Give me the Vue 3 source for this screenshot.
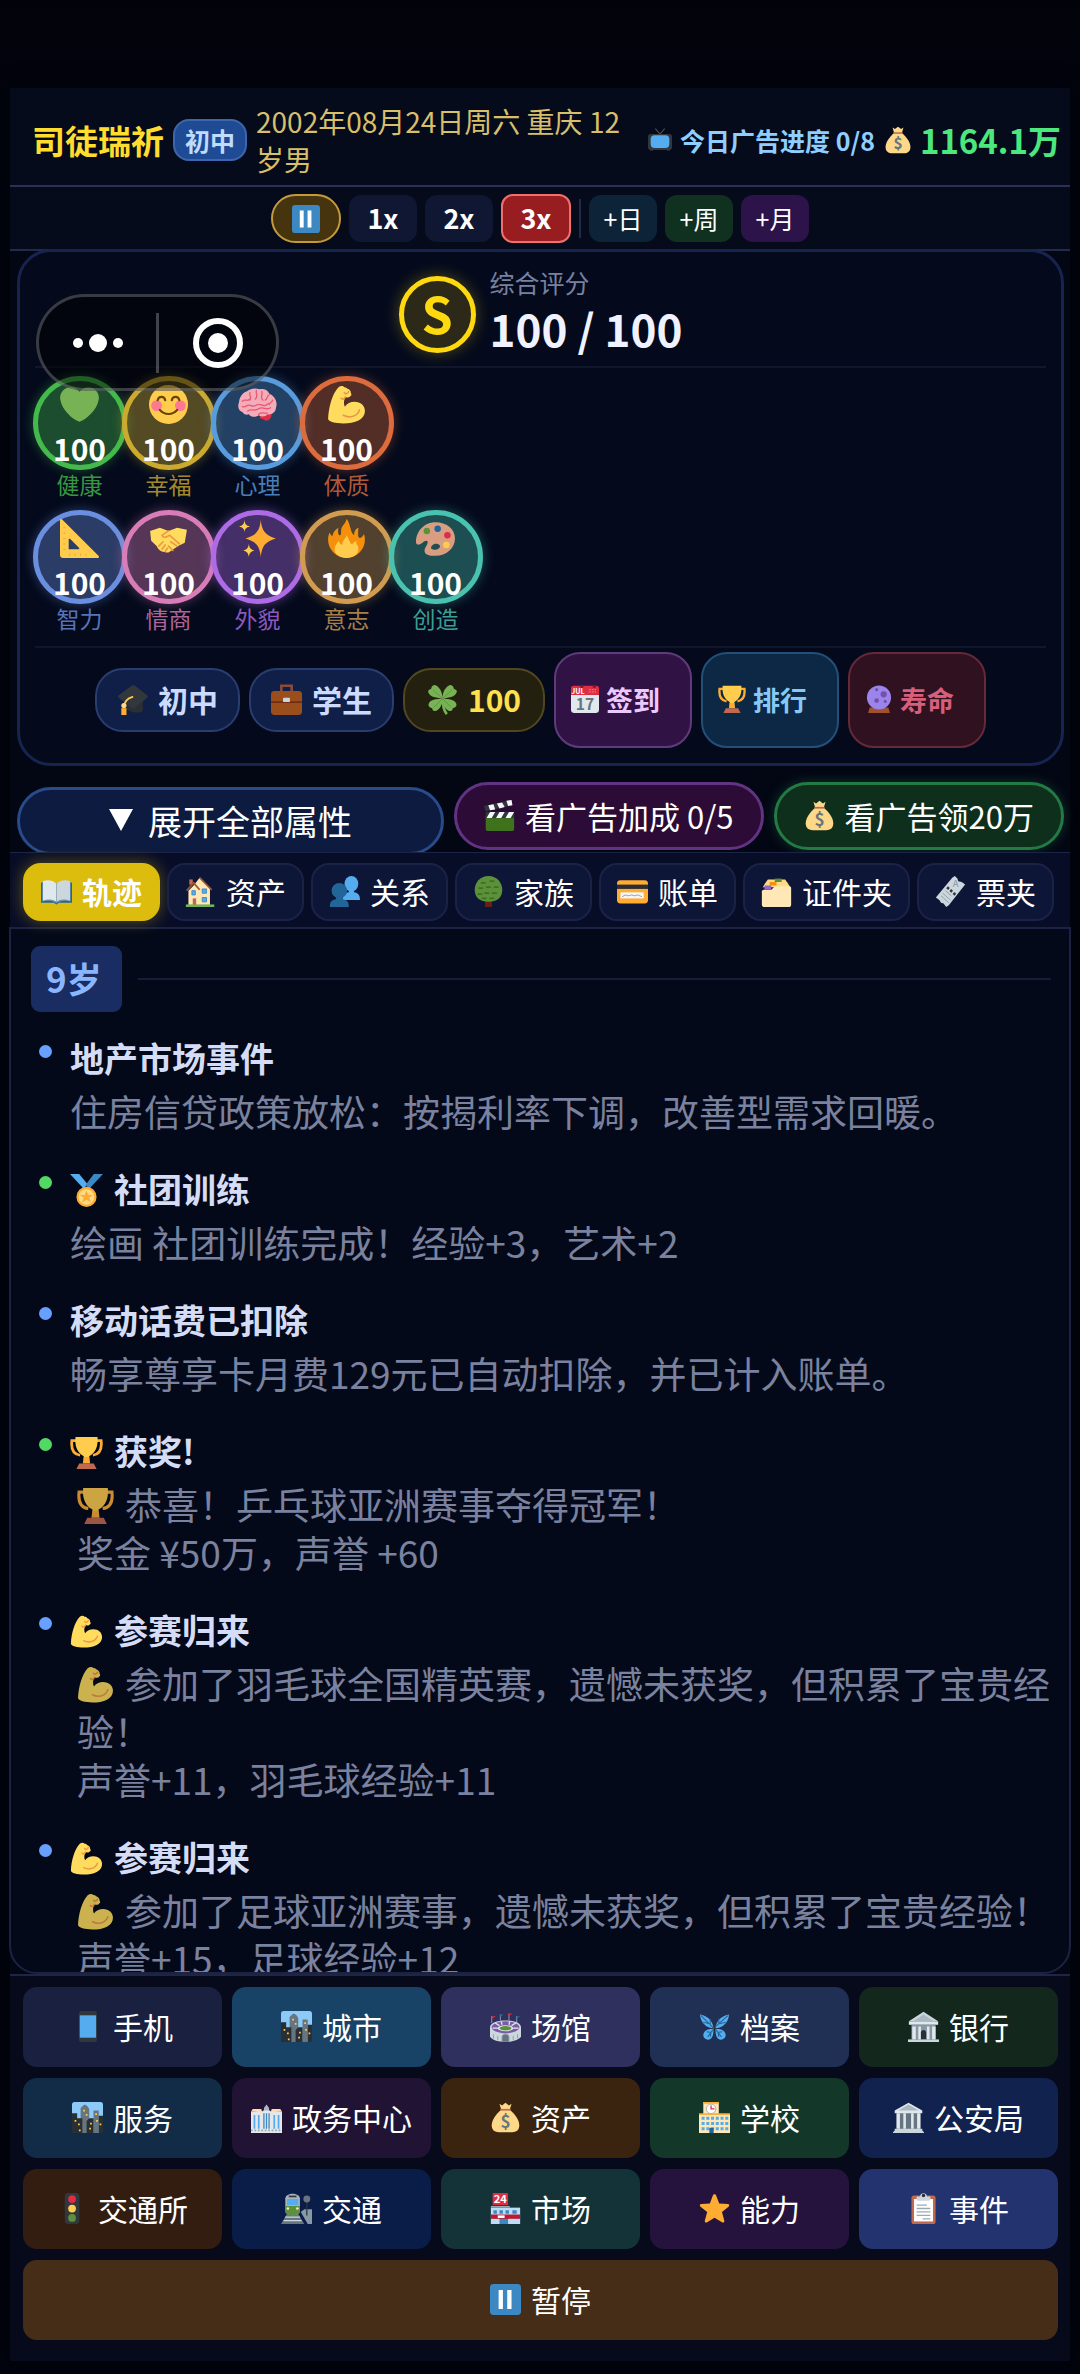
<template>
  <div class="page">
    <svg class="sprite" aria-hidden="true">
      <symbol id="i-tv" viewBox="0 0 36 36">
        <path d="M11 1l7 8 7-8" fill="none" stroke="#4d555b" stroke-width="1.6" />
        <path d="M3 34h5l1-3H3zM28 34h5v-3h-6z" fill="#292f33" />
        <rect x="0" y="9" width="36" height="24" rx="4" fill="#31373d" />
        <rect x="4" y="11" width="28" height="19" rx="6" fill="#55acee" />
      </symbol>
      <symbol id="i-bag" viewBox="0 0 36 36">
        <path d="M11 2l3 2 4-3 4 3 3-2-2 7H13z" fill="#fdd888" />
        <path d="M13 9h10c6 5 11 12 11 18 0 6-4 8-8 8H10c-4 0-8-2-8-8C2 21 7 14 13 9z" fill="#fdd888" />
        <path d="M12 8h12v2H12z" fill="#bf6952" />
        <text x="18" y="30" text-anchor="middle" font-size="20" font-weight="700" fill="#67757f">$</text>
      </symbol>
      <symbol id="i-pause" viewBox="0 0 36 36">
        <rect width="36" height="36" rx="4" fill="#3b88c3" />
        <path d="M10 7h5v22h-5zM20 7h5v22h-5z" fill="#fff" />
      </symbol>
      <symbol id="i-heart" viewBox="0 0 36 36">
        <path d="M35.900 11.800c0-5.400-4.300-9.800-9.700-9.800-3.300 0-6.300 1.700-8.200 4.300C16.200 3.700 13.200 2 9.900 2 4.500 2 .1 6.400.1 11.800c0 .8.100 1.500.300 2.200C1.800 22.600 11.200 31.600 18 34c6.800-2.400 16.200-11.500 17.600-20 .2-.7.300-1.400.300-2.200z" fill="#77b255" />
      </symbol>
      <symbol id="i-smile" viewBox="0 0 36 36">
        <circle cx="18" cy="18" r="18" fill="#ffcc4d" />
        <circle cx="7" cy="19" r="5" fill="#ff7892" />
        <circle cx="29" cy="19" r="5" fill="#ff7892" />
        <path d="M8 14c1-4 6-4 7 0M21 14c1-4 6-4 7 0M10 23c4 5 12 5 16 0" fill="none" stroke="#664500" stroke-width="2" stroke-linecap="round" />
      </symbol>
      <symbol id="i-brain" viewBox="0 0 36 36">
        <path d="M21 27c2-3 8-3 10 0 0 3-2 6-5 6-2 0-3-2-6-2z" fill="#dd2e44" />
        <path d="M29 8c-2-4-6-5-9-4-5-2-10 0-12 2-4 1-7 6-7 10-2 4 0 8 3 9 1 2 4 3 6 2 2 3 7 3 9 1 3 2 7 1 8-1 4 1 8-2 8-6 2-5-1-11-6-13z" fill="#f4abba" />
        <path d="M4 15c3-3 4 1 7-2M11 7c-1 3 2 4 0 7M17 5c-1 3 2 5-1 8M22 6c1 4-2 5 1 8M29 9c-3 1-1 4-4 5M4 20c4 1 4-3 8-1s5-2 8-1 5 2 8-1M9 24c4-3 6 1 10-2s7 2 11-1M19 27c2-2 5-1 8-1M32 14c-1 3-3 2-3 4" fill="none" stroke="#ea596e" stroke-width="1.200" stroke-linecap="round" />
      </symbol>
      <symbol id="i-muscle" viewBox="0 0 36 36">
        <path d="M15.900 2c-1-1.500-3.500-1.500-5.500.2C5 8 1.500 20 1 31c0 3 7 4.500 14 4.500 11 0 20-3.500 20-11.500 0-5-4-8.500-9.500-8.500-4 0-7 1.500-9 4.500-1.500-3-1-6 .5-9 2 1 4 .5 4.800-1 1-.4 1-1.500.2-2.500.3-2-1.500-3.500-3-4-.8-1-2-1.500-3.100-1.500z" fill="#ffdc5d" />
        <path d="M15 28c6 3 13 1 15-5M16 7c1 2 3 1 4-1M13 12c1 2 3 1 4-1" fill="none" stroke="#ef9645" stroke-width="1.500" stroke-linecap="round" />
      </symbol>
      <symbol id="i-ruler" viewBox="0 0 36 36">
        <path fill-rule="evenodd" d="M0 1c0-1 1-1.500 2-.5L35.500 34c1 1 .5 2-.5 2H3c-2 0-3-1-3-3zM8 19v9h9c1 0 1-1 .5-1.500l-8-8c-.5-.5-1.500-.5-1.500.5z" fill="#ffcc4d" />
        <path d="M3 8h2M3 13h2M3 18h2M3 23h2M3 28h2M9 32v2M14 32v2M19 32v2M24 32v2" stroke="#f4900c" stroke-width=".6" />
      </symbol>
      <symbol id="i-handshake" viewBox="0 0 36 36">
        <path d="M1 11l9-3 8 3 8-3 9 2-2 12-6 3-9 6c-3 0-5-1-6-1-3-1-4-3-5-5L2 20z" fill="#ffdc5d" />
        <path d="M18 11l-6 4c1 3 4 2 7 0l9 8M9 25l4-4M12 28l3-4M15 30l2-3M20 21l6 4M18 25l4 4" fill="none" stroke="#ef9645" stroke-width="1.500" stroke-linecap="round" />
      </symbol>
      <symbol id="i-sparkles" viewBox="0 0 36 36">
        <path d="M21 1c1 10 4 14 14 17-10 3-13 7-14 17-1-10-4-14-14-17C17 15 20 11 21 1z" fill="#ffac33" />
        <path d="M6 1c.5 4 1.500 5 5 6-3.500 1-4.500 2-5 5-.5-3-1.500-4-5-5 3.500-1 4.500-2 5-6zM10 23c.6 4 2 5 5 6-3 1-4.400 2-5 6-.6-4-2-5-5-6 3-1 4.400-2 5-6z" fill="#ffcc4d" />
      </symbol>
      <symbol id="i-fire" viewBox="0 0 36 36">
        <path d="M35 19c0-2-.3-3.600-.8-5.200-.8 1.500-2.200 3.700-3.700 3.700-2.700 0-1.500-6.500-1.500-9.500-3 1-4 4-4 7-4-3-3-11-7-15-1 5-5 6-5 11 0 2 0 4-1 4-2 0-2-4-1.500-7C7 10 5 14 5 16c-1-.5-2-2-2.500-3.500C1.400 14.500 1 16.700 1 19c0 9.400 7.600 17 17 17s17-7.600 17-17z" fill="#f4900c" />
        <path d="M28 24c-1-1-1-2-1-4-2 1-3 3-4 3-2 0-2-4-5-8-1 4-4 5-4 9-2-1-3-2-3-4-2 2-4 5-4 8 0 5 5 8 11 8s11-3 11-8c0-2-.5-3-1-4z" fill="#ffcc4d" />
      </symbol>
      <symbol id="i-palette" viewBox="0 0 36 36">
        <path fill-rule="evenodd" d="M18 3C8 3 0 11 0 21c0 4 4 3 7 0 3-2 5-1 3 3-2 3-3 6-1 8 3 2 7 2 9 2 10 0 18-7 18-16S28 3 18 3zm-1 20c3-1 6 1 5 3s-5 3-7 2-1-4 2-5z" fill="#d99e82" />
        <circle cx="10" cy="11" r="3" fill="#5c913b" />
        <circle cx="20" cy="9" r="3" fill="#226699" />
        <circle cx="29" cy="15" r="3" fill="#dd2e44" />
        <circle cx="28" cy="24" r="3" fill="#ffcc4d" />
      </symbol>
      <symbol id="i-cap" viewBox="0 0 36 36">
        <path d="M9 18v9c3 5 16 9 21 4V18z" fill="#292f33" />
        <path d="M17 2c1-.7 3-.7 4 0l14 11c1 1 1 2 0 3L21 28c-1 1-3 1-4 0L2 16c-1-1-1-2 0-3z" fill="#31373d" />
        <path d="M18 15c-6 2-10 5-10 12" fill="none" stroke="#ffcc4d" stroke-width="2" stroke-linecap="round" />
        <circle cx="8" cy="25" r="3" fill="#ffd983" />
        <path d="M5 28h6v8H5z" fill="#ffac33" />
      </symbol>
      <symbol id="i-briefcase" viewBox="0 0 36 36">
        <path d="M12 8V2h12v6" fill="none" stroke="#8a4b38" stroke-width="3" />
        <rect x="0" y="8" width="36" height="28" rx="4" fill="#9a4e1c" />
        <path d="M0 21h36" stroke="#662113" stroke-width="1.500" />
        <rect x="14" y="16" width="8" height="5" rx="1" fill="#ccd6dd" />
      </symbol>
      <symbol id="i-clover" viewBox="0 0 36 36">
        <path d="M19 17c-1 7 0 13 4 18" fill="none" stroke="#77b255" stroke-width="3" />
        <path d="M18 17L8 15C3 14 0 9 2 7c2-1 3-1 3-2 0-3 4-5 6-3 5 3 7 9 7 15zM18 17c0-6 2-12 7-15 2-2 6 0 6 3 0 1 1 1 3 2 2 2-1 7-6 8zM18 17c0 6-2 11-7 14-3 1-5 0-5-3-3 0-5-3-4-5 1-5 9-6 16-6zM18 17c7 0 15 1 16 6 1 2-1 5-4 5 0 3-2 4-5 3-5-3-7-8-7-14z" fill="#77b255" />
        <path d="M7 7l11 10L29 7M8 27l10-10 10 10" fill="none" stroke="#5c913b" />
      </symbol>
      <symbol id="i-calendar" viewBox="0 0 36 36">
        <path d="M0 12h36v20c0 2-2 4-4 4H4c-2 0-4-2-4-4z" fill="#e1e8ed" />
        <path d="M0 4c0-2 2-3 4-3h28c2 0 4 1 4 3v9H0z" fill="#dd2e44" />
        <circle cx="14" cy="2" r="2" fill="#761c2b" />
        <circle cx="30" cy="2" r="2" fill="#761c2b" />
        <text x="9" y="11" text-anchor="middle" font-size="9" font-weight="700" fill="#fff">JUL</text>
        <path d="M23 6h10M23 9h10" stroke="#f5bdc5" stroke-dasharray="1 1" />
        <text x="18" y="32" text-anchor="middle" font-size="20" font-weight="700" fill="#66757f">17</text>
      </symbol>
      <symbol id="i-trophy" viewBox="0 0 36 36">
        <path d="M7 5H2c-1 9 2 15 9 16M29 5h5c1 9-2 15-9 16" fill="none" stroke="#ffac33" stroke-width="3" />
        <path d="M6 1h24c1 10-2 17-9 21v7h-6v-7C8 18 5 11 6 1z" fill="#ffcc4d" />
        <path d="M15 23h6l1 7h-8z" fill="#ffac33" />
        <path d="M10 30h16l3 6H7z" fill="#c1694f" />
      </symbol>
      <symbol id="i-crystal" viewBox="0 0 36 36">
        <path d="M6 29h24l2 7H4z" fill="#a0522d" />
        <circle cx="18" cy="16" r="15.500" fill="#9b84ec" />
        <circle cx="24" cy="12" r="4" fill="#7450a8" />
        <circle cx="15" cy="20" r="3" fill="#7450a8" />
        <circle cx="15" cy="6" r="2" fill="#7450a8" />
        <circle cx="26" cy="21" r="2" fill="#7450a8" />
      </symbol>
      <symbol id="i-clapper" viewBox="0 0 36 36">
        <rect x="2" y="16" width="33" height="20" rx="3" fill="#3e721d" />
        <path d="M2 14h33v7H2z" fill="#31373d" />
        <path d="M7 14h6l-4 7H3zM18 14h6l-4 7h-6zM29 14h6l-4 7h-6z" fill="#f5f8fa" />
        <path d="M0 7L32 0l1 6L2 13z" fill="#31373d" />
        <path d="M5 6l6-1 2 6-6 1zM15 4l6-1 3 5-6 2zM26 1l6-1 1 6-5 1z" fill="#f5f8fa" />
      </symbol>
      <symbol id="i-book" viewBox="0 0 36 36">
        <path d="M0 8c6-3 12-2 18 1 6-3 12-4 18-1v23H21l-3 2-3-2H0z" fill="#226699" />
        <path d="M2 6c6-2 12-1 16 3v21c-4-3-10-3-16-1z" fill="#e1e8ed" />
        <path d="M34 6c-6-2-12-1-16 3v21c4-3 10-3 16-1z" fill="#ccd6dd" />
        <path d="M18 9v21M2 29c5-2 12-1 16 2 4-3 11-4 16-2" fill="none" stroke="#99aab5" />
      </symbol>
      <symbol id="i-house" viewBox="0 0 36 36">
        <path d="M4 34V17l6-6 7-9 12 12v20z" fill="#ffe8b6" />
        <path d="M5 4h4v6H5z" fill="#c1694f" />
        <path d="M2 17l8-9 7 8M17 2l14 14" fill="none" stroke="#a0542e" stroke-width="2" />
        <path d="M8 17h4v5H8zM20 15h5v5h-5zM20 25h5v5h-5z" fill="#55acee" stroke="#3b88c3" />
        <path d="M9 26h4v8H9z" fill="#c1694f" />
        <path d="M1 33h33v3H1z" fill="#77b255" />
      </symbol>
      <symbol id="i-people" viewBox="0 0 36 36">
        <ellipse cx="26" cy="9" rx="8" ry="9" fill="#55acee" />
        <path d="M23 14h6v5c5 1 7 3 7 9H16c0-6 2-8 7-9z" fill="#55acee" />
        <ellipse cx="12" cy="17" rx="9" ry="9" fill="#226699" />
        <path d="M8 23h8v4c6 1 7 4 7 9H1c0-5 1-8 7-9z" fill="#226699" />
      </symbol>
      <symbol id="i-tree" viewBox="0 0 36 36">
        <path d="M14 28h8v8h-8z" fill="#662113" />
        <path d="M18 0C8 0 2 8 2 16c0 9 6 14 16 14s16-5 16-14C34 8 28 0 18 0z" fill="#5c913b" />
        <path d="M10 8h4M20 6h4M7 14h4M16 13h4M25 13h4M6 21h4M14 20h4M23 20h4M11 26h4M20 26h4" stroke="#3e721d" stroke-width="2" stroke-linecap="round" />
      </symbol>
      <symbol id="i-card" viewBox="0 0 36 36">
        <rect y="5" width="36" height="27" rx="4" fill="#ffac33" />
        <path d="M0 10h36v5H0z" fill="#292f33" />
        <path d="M4 19h27v7H4z" fill="#f4f7f9" />
        <path d="M6 24l4-2 3 1 4-1 3 1 4-1 5 2" fill="none" stroke="#8899a6" />
      </symbol>
      <symbol id="i-folder" viewBox="0 0 36 36">
        <path d="M5 8l3-4h20l3 4 3 5H2z" fill="#ffd983" />
        <path d="M16 3h8v4h-8z" fill="#5c913b" />
        <path d="M10 7h8v4h-8z" fill="#f4900c" />
        <path d="M1 17l2-1h9l4-4h17c1 0 2 1 2 2v19c0 2-1 3-3 3H4c-2 0-3-1-3-3z" fill="#ffe8b6" />
        <path d="M4 11h8v5H4z" fill="#9268ca" />
      </symbol>
      <symbol id="i-ticket" viewBox="0 0 36 36">
        <path d="M20 2l3-2 3 3 1 3 4 1 4 3-19 24-3 2-3-4-3-1-2-3-4-3L20 2z" fill="#ccd6dd" />
        <path d="M14 13l10 9" stroke="#31373d" stroke-width="3" stroke-dasharray="3 2" />
        <path d="M7 23l9 8M9 20l9 8M12 17l7 6" stroke="#8899a6" />
        <text x="24" y="13" text-anchor="middle" font-size="11" fill="#8899a6">A</text>
      </symbol>
      <symbol id="i-medal" viewBox="0 0 36 36">
        <path d="M0 0h10l9 11-4 5z" fill="#55acee" />
        <path d="M26 0h10L21 16l-4-4z" fill="#3b88c3" />
        <circle cx="18" cy="25" r="11" fill="#ffac33" />
        <circle cx="18" cy="25" r="8.500" fill="#ffd983" />
        <path d="M18 18l2 5h5l-4 3 2 5-5-3-5 3 2-5-4-3h5z" fill="#ffac33" />
      </symbol>
      <symbol id="i-phone" viewBox="0 0 36 36">
        <rect x="8" y="0" width="21" height="36" rx="3" fill="#31373d" />
        <path d="M9 5h19v26H9z" fill="#55acee" />
      </symbol>
      <symbol id="i-city" viewBox="0 0 36 36">
        <rect width="36" height="36" rx="3" fill="#8ccaf7" />
        <path d="M10 36V7l3-3 2-1 3 2 2 3v28zM25 36V10h6v26z" fill="#66757f" />
        <path d="M0 13h6v6h6v17H0zM17 36V22l3-3h5v17zM31 36V16h5v20z" fill="#292f33" />
        <path d="M13 9h2v2h-2zM16 14h2v2h-2zM27 13h2v2h-2zM3 21h2v2H3zM7 25h2v2H7zM8 32h2v2H8zM21 24h2v2h-2zM20 30h2v2h-2zM28 21h2v2h-2zM32 25h2v2h-2z" fill="#ffcc4d" />
      </symbol>
      <symbol id="i-stadium" viewBox="0 0 36 36">
        <path d="M2 14V6M12 11V4M22 11V4M31 14V6" stroke="#99aab5" />
        <path d="M2 6h5L2 9zM21 3h5l-5 3z" fill="#dd2e44" />
        <path d="M12 4h4l-4 3zM31 6h4l-4 3z" fill="#226699" />
        <path d="M0 19c0-5 8-8 18-8s18 3 18 8v11c-3 4-10 6-18 6S3 34 0 30z" fill="#ccd6dd" />
        <ellipse cx="18" cy="19" rx="16" ry="7" fill="#7b5ba6" />
        <path d="M6 14l5 3M13 12l1 4M23 12l-1 4M30 14l-5 3M3 20h6M33 20h-6" stroke="#e1e8ed" stroke-width="1.500" />
        <ellipse cx="18" cy="20" rx="9" ry="3.500" fill="#e1e8ed" />
        <ellipse cx="18" cy="20" rx="7" ry="2.500" fill="#5c913b" />
        <path d="M4 27v5M9 29v5M27 29v5M32 27v5M14 36v-6c0-4 8-4 8 0v6z" fill="#66757f" stroke="#8899a6" />
      </symbol>
      <symbol id="i-butterfly" viewBox="0 0 36 36">
        <path d="M17 20C9 20 2 14 1 4c8 1 15 7 16 16zM19 20c8 0 15-6 16-16-8 1-15 7-16 16z" fill="#55acee" />
        <path d="M17 21c-6-1-12 2-12 7 0 4 4 6 7 5 4-1 5-7 5-12zM19 21c6-1 12 2 12 7 0 4-4 6-7 5-4-1-5-7-5-12z" fill="#55acee" />
        <path d="M2 5l15 15L34 5M5 13l8 2 0-6M31 13l-8 2V9M17 21l-7 9M19 21l7 9M9 24l5 1-1 5M27 24l-5 1 1 5" fill="none" stroke="#226699" stroke-width="1.200" />
        <path d="M18 14v13" stroke="#292f33" stroke-width="1.500" />
      </symbol>
      <symbol id="i-bank" viewBox="0 0 36 36">
        <path d="M18 1l17 11H1z" fill="#ccd6dd" />
        <path d="M18 4l12 8H6z" fill="#aab8c2" />
        <path d="M1 12h34v4H1z" fill="#e1e8ed" />
        <path d="M4 16h28v17H4z" fill="#8899a6" />
        <path d="M5 18h4v15H5zM12 18h3v15h-3zM22 18h3v15h-3zM28 18h4v15h-4z" fill="#e1e8ed" />
        <path d="M15 33v-8c0-4 6-4 6 0v8z" fill="#292f33" />
        <path d="M0 33h36v3H0z" fill="#ccd6dd" />
      </symbol>
      <symbol id="i-hall" viewBox="0 0 36 36">
        <path d="M5 12h26v20H5z" fill="#66757f" />
        <path d="M18 1l16 9v3H2v-3z" fill="#e1e8ed" />
        <path d="M18 3l12 7H6z" fill="#aab8c2" />
        <path d="M4 13h4v18H4zM12 13h3v18h-3zM21 13h3v18h-3zM28 13h4v18h-4z" fill="#e1e8ed" />
        <path d="M2 31h32v2l2 2v1H0v-1l2-2z" fill="#ccd6dd" />
      </symbol>
      <symbol id="i-gov" viewBox="0 0 36 36">
        <path d="M15 11V7l3-4 3 4v4z" fill="#aab8c2" />
        <path d="M0 11l2-3h10l1 4zM23 12l1-4h10l2 3z" fill="#ffd8b5" />
        <path d="M0 11h13l1-1h8l1 1h13v25H0z" fill="#e6e7e8" />
        <path d="M4 15v16M9 15v16M27 15v16M32 15v16" stroke="#55acee" stroke-width="2" />
        <path d="M15 13v18M18 13v18M21 13v18" stroke="#3b88c3" stroke-width="1.500" />
        <path d="M0 33h36" stroke="#99aab5" stroke-dasharray="2 2" stroke-width="2" />
      </symbol>
      <symbol id="i-school" viewBox="0 0 36 36">
        <path d="M5 0h18v14H5z" fill="#ffe8b6" />
        <path d="M5 0h18v2H5zM0 13h36v3H0z" fill="#ffac33" />
        <path d="M0 15h36v21H0z" fill="#ffe8b6" />
        <circle cx="14" cy="8" r="5.500" fill="#fff" stroke="#99aab5" />
        <path d="M14 4v4h4" fill="none" stroke="#dd2e44" stroke-width="1.500" />
        <path d="M3 19h31M3 25h31M3 31h31" stroke="#55acee" stroke-width="3.500" stroke-dasharray="3.500 2" />
        <path d="M12 30h5v6h-5z" fill="#226699" />
      </symbol>
      <symbol id="i-light" viewBox="0 0 36 36">
        <rect x="9" width="17" height="36" rx="4" fill="#31373d" />
        <circle cx="17.500" cy="7" r="4.500" fill="#dd2e44" />
        <circle cx="17.500" cy="18" r="4.500" fill="#ffcc4d" />
        <circle cx="17.500" cy="29" r="4.500" fill="#5c913b" />
      </symbol>
      <symbol id="i-train" viewBox="0 0 36 36">
        <path d="M7 24h13l7 12H0z" fill="#66757f" />
        <path d="M5 28h17M3 32h21" stroke="#ccd6dd" stroke-width="1.500" />
        <path d="M23 22l4-3h9v17h-5z" fill="#8899a6" />
        <path d="M30 8v18" stroke="#31373d" stroke-width="1.500" />
        <circle cx="30" cy="7" r="4" fill="#66757f" />
        <path d="M5 6c1-7 16-7 17 0v16c-3 5-14 5-17 0z" fill="#a6b3bd" />
        <path d="M5 15h17v7c-3 5-14 5-17 0z" fill="#5c913b" />
        <path d="M7 7h13v7H7z" fill="#55acee" />
        <path d="M9 3h9v2H9z" fill="#31373d" />
        <circle cx="8" cy="18" r="1.500" fill="#ffe8b6" />
        <circle cx="19" cy="18" r="1.500" fill="#ffe8b6" />
      </symbol>
      <symbol id="i-store" viewBox="0 0 36 36">
        <path d="M1 17h34v19H1z" fill="#bdddf4" />
        <path d="M4 20h4v4H4zM11 20h4v4h-4zM18 20h4v4h-4zM26 20h5v4h-5zM11 29h10v7H11z" fill="#3b88c3" />
        <path d="M1 15h22v2H1z" fill="#99aab5" />
        <path d="M1 25h34v5H1z" fill="#be1931" />
        <path d="M9 26h8v3H9z" fill="#fff" />
        <rect x="3" y="0" width="18" height="14" rx="1" fill="#dd2e44" />
        <text x="12" y="12" text-anchor="middle" font-size="13" font-weight="700" fill="#fff">24</text>
      </symbol>
      <symbol id="i-star" viewBox="0 0 36 36">
        <path d="M18 1.500c1 0 1.500.6 1.900 1.500l3.600 9.300 9.900.5c2 .2 2.300 1.900.9 3.100l-7.600 6.300 2.600 9.700c.5 2-.9 3-2.600 2L18 28.600l-8.500 5.300c-1.800 1-3.200-.1-2.700-2l2.700-9.700-7.700-6.300c-1.500-1.200-1-2.900.9-3.100l9.900-.5L16.100 3c.4-.9 1-1.500 1.900-1.500z" fill="#ffac33" />
      </symbol>
      <symbol id="i-clip" viewBox="0 0 36 36">
        <rect x="4" y="3" width="28" height="33" rx="3" fill="#c1694f" />
        <path d="M7 7h22v26H7z" fill="#fff" />
        <path d="M10 7V4h4c0-5 8-5 8 0h4v3c0 1-1 2-2 2H12c-1 0-2-1-2-2z" fill="#ccd6dd" />
        <circle cx="18" cy="3" r="2" fill="#292f33" />
        <path d="M10 14h12M10 18h16M10 22h16M10 26h16M17 30h9" stroke="#99aab5" stroke-width="1.500" />
      </symbol>
    </svg>

    <main class="app">
      <header class="top-bar">
        <h1 class="player-name">司徒瑞祈</h1>
        <span class="stage-badge">初中</span>
        <span class="date-info">2002年08月24日周六 重庆 12岁男</span>
        <span class="ad-progress">
          <svg class="icon icon-24"><use href="#i-tv" /></svg>
          今日广告进度 0/8
        </span>
        <span class="money">
          <svg class="icon icon-28"><use href="#i-bag" /></svg>
          1164.1万
        </span>
      </header>

      <nav class="speed-bar">
        <button type="button" class="speed-btn pause" aria-label="暂停">
          <svg class="icon icon-28"><use href="#i-pause" /></svg>
        </button>
        <button
          v-for="s in speeds"
          :key="s"
          type="button"
          class="speed-btn"
          :class="{ active: speed === s }"
          @click="speed = s"
        >{{ s }}x</button>
        <span class="separator"></span>
        <button type="button" class="speed-btn skip day">+日</button>
        <button type="button" class="speed-btn skip week">+周</button>
        <button type="button" class="speed-btn skip month">+月</button>
      </nav>

      <section class="stat-card">
        <div class="score-row">
          <div class="grade">S</div>
          <div class="score-info">
            <span class="score-label">综合评分</span>
            <span class="score-value">100 / 100</span>
          </div>
        </div>

        <div class="stats">
          <div v-for="(row, i) in statRows" :key="i" class="stat-row">
            <div v-for="stat in row" :key="stat.icon" class="stat" :class="stat.color">
              <div class="stat-circle">
                <svg class="icon icon-39"><use :href="'#i-' + stat.icon" /></svg>
                <span class="stat-value">100</span>
              </div>
              <span class="stat-label">{{ stat.label }}</span>
            </div>
          </div>
        </div>

        <div class="chips">
          <span class="chip"><svg class="icon icon-31"><use href="#i-cap" /></svg>初中</span>
          <span class="chip"><svg class="icon icon-31"><use href="#i-briefcase" /></svg>学生</span>
          <span class="chip luck"><svg class="icon icon-31"><use href="#i-clover" /></svg>100</span>
          <button type="button" class="chip-btn sign"><svg class="icon icon-28"><use href="#i-calendar" /></svg>签到</button>
          <button type="button" class="chip-btn rank"><svg class="icon icon-28"><use href="#i-trophy" /></svg>排行</button>
          <button type="button" class="chip-btn life"><svg class="icon icon-28"><use href="#i-crystal" /></svg>寿命</button>
        </div>

        <div class="capsule">
          <button type="button" class="capsule-btn" aria-label="更多">
            <svg class="capsule-dots" viewBox="0 0 50 18">
              <circle cx="5" cy="9" r="5" />
              <circle cx="25" cy="9" r="9" />
              <circle cx="45" cy="9" r="5" />
            </svg>
          </button>
          <span class="capsule-line"></span>
          <button type="button" class="capsule-btn" aria-label="关闭">
            <svg class="capsule-ring" viewBox="0 0 50 50">
              <circle cx="25" cy="25" r="22" fill="none" stroke="#fff" stroke-width="6" />
              <circle cx="25" cy="25" r="10" />
            </svg>
          </button>
        </div>
      </section>

      <div class="actions">
        <button type="button" class="expand-btn">
          <svg class="arrow" viewBox="0 0 24 22"><path d="M0 0h24L12 22z" fill="#fff" /></svg>
          展开全部属性
        </button>
        <button type="button" class="ad-btn boost"><svg class="icon icon-31"><use href="#i-clapper" /></svg>看广告加成 0/5</button>
        <button type="button" class="ad-btn cash"><svg class="icon icon-31"><use href="#i-bag" /></svg>看广告领20万</button>
      </div>

      <nav class="tabs">
        <button
          v-for="tab in tabs"
          :key="tab.icon"
          type="button"
          class="tab"
          :class="{ active: currentTab === tab.icon }"
          @click="currentTab = tab.icon"
        >
          <svg class="icon icon-31"><use :href="'#i-' + tab.icon" /></svg>{{ tab.label }}
        </button>
      </nav>

      <section class="log">
        <div class="age-row">
          <h2 class="age-badge">9岁</h2>
          <span class="age-line"></span>
        </div>
        <article v-for="(event, i) in events" :key="i" class="event">
          <span class="dot" :class="event.type"></span>
          <div class="event-body">
            <h3 class="event-title">
              <svg v-if="event.icon" class="icon icon-33"><use :href="'#i-' + event.icon" /></svg>{{ event.title }}
            </h3>
            <div class="event-desc" :class="{ indent: event.descIcon }">
              <p v-for="(line, n) in event.lines" :key="n">
                <svg v-if="n === 0 && event.descIcon" class="icon icon-37"><use :href="'#i-' + event.descIcon" /></svg>{{ line }}
              </p>
            </div>
          </div>
        </article>
      </section>

      <footer class="menu">
        <button v-for="item in menu" :key="item.label" type="button" class="menu-btn" :class="item.color">
          <svg class="icon icon-31"><use :href="'#i-' + item.icon" /></svg>{{ item.label }}
        </button>
      </footer>
    </main>
  </div>
</template>

<script setup>
import { ref } from 'vue';

const speeds = [1, 2, 3];
const speed = ref(3);
const currentTab = ref('book');

const statRows = [
  [
    { icon: 'heart', label: '健康', color: 'green' },
    { icon: 'smile', label: '幸福', color: 'yellow' },
    { icon: 'brain', label: '心理', color: 'blue' },
    { icon: 'muscle', label: '体质', color: 'orange' },
  ],
  [
    { icon: 'ruler', label: '智力', color: 'indigo' },
    { icon: 'handshake', label: '情商', color: 'pink' },
    { icon: 'sparkles', label: '外貌', color: 'purple' },
    { icon: 'fire', label: '意志', color: 'amber' },
    { icon: 'palette', label: '创造', color: 'teal' },
  ],
];

const tabs = [
  { icon: 'book', label: '轨迹' },
  { icon: 'house', label: '资产' },
  { icon: 'people', label: '关系' },
  { icon: 'tree', label: '家族' },
  { icon: 'card', label: '账单' },
  { icon: 'folder', label: '证件夹' },
  { icon: 'ticket', label: '票夹' },
];

const events = [
  { type: 'info', title: '地产市场事件', lines: ['住房信贷政策放松：按揭利率下调，改善型需求回暖。'] },
  { type: 'good', icon: 'medal', title: '社团训练', lines: ['绘画 社团训练完成！经验+3，艺术+2'] },
  { type: 'info', title: '移动话费已扣除', lines: ['畅享尊享卡月费129元已自动扣除，并已计入账单。'] },
  { type: 'good', icon: 'trophy', title: '获奖!', descIcon: 'trophy', lines: ['恭喜！乒乓球亚洲赛事夺得冠军！', '奖金 ¥50万，声誉 +60'] },
  { type: 'info', icon: 'muscle', title: '参赛归来', descIcon: 'muscle', lines: ['参加了羽毛球全国精英赛，遗憾未获奖，但积累了宝贵经验！', '声誉+11，羽毛球经验+11'] },
  { type: 'info', icon: 'muscle', title: '参赛归来', descIcon: 'muscle', lines: ['参加了足球亚洲赛事，遗憾未获奖，但积累了宝贵经验！', '声誉+15，足球经验+12'] },
];

const menu = [
  { icon: 'phone', label: '手机', color: 'c-phone' },
  { icon: 'city', label: '城市', color: 'c-city' },
  { icon: 'stadium', label: '场馆', color: 'c-venue' },
  { icon: 'butterfly', label: '档案', color: 'c-file' },
  { icon: 'bank', label: '银行', color: 'c-bank' },
  { icon: 'city', label: '服务', color: 'c-service' },
  { icon: 'gov', label: '政务中心', color: 'c-gov' },
  { icon: 'bag', label: '资产', color: 'c-asset' },
  { icon: 'school', label: '学校', color: 'c-school' },
  { icon: 'hall', label: '公安局', color: 'c-police' },
  { icon: 'light', label: '交通所', color: 'c-traffic' },
  { icon: 'train', label: '交通', color: 'c-train' },
  { icon: 'store', label: '市场', color: 'c-market' },
  { icon: 'star', label: '能力', color: 'c-skill' },
  { icon: 'clip', label: '事件', color: 'c-event' },
  { icon: 'pause', label: '暂停', color: 'c-pause' },
];
</script>

<style>
body {
  margin: 0;
  background: #02040d;
}
</style>

<style scoped>
.page {
  box-sizing: border-box;
  height: 100vh;
  padding: 88px 10px 13px;
  display: flex;
  flex-direction: column;
  background: linear-gradient(#02030a, #02040e 100px);
  color: #fff;
  font-family: "Noto Sans CJK SC", "Noto Sans", sans-serif;
}

.page * {
  box-sizing: border-box;
}

.sprite {
  display: none;
}

h1,
h2,
h3,
p {
  margin: 0;
}

button {
  border: none;
  margin: 0;
  padding: 0;
  color: inherit;
  font-family: inherit;
  white-space: nowrap;
  cursor: pointer;
}

.icon {
  flex: none;
}

.icon-24 {
  width: 24px;
  height: 24px;
}

.icon-28 {
  width: 28px;
  height: 28px;
}

.icon-31 {
  width: 31px;
  height: 31px;
}

.icon-33 {
  width: 33px;
  height: 33px;
}

.icon-37 {
  width: 37px;
  height: 37px;
}

.icon-39 {
  width: 39px;
  height: 39px;
}

.app {
  flex: 1;
  min-height: 0;
  display: flex;
  flex-direction: column;
  background: #030714;
  box-shadow: 0 0 20px rgba(0, 0, 0, 0.5);
}

/* header */
.top-bar {
  display: flex;
  align-items: center;
  gap: 9px;
  padding: 14px 9px 7px 22px;
  background: #060b1c;
  border-bottom: 2px solid #293256;
  white-space: nowrap;
}

.player-name {
  color: #ffdc2e;
  font-size: 33px;
  line-height: 42px;
}

.stage-badge {
  padding: 0 10px;
  border: 2px solid #3d66ac;
  border-radius: 16px;
  background: #1f4b95;
  color: #bfdcff;
  font-size: 25px;
  font-weight: 700;
  line-height: 38px;
}

.date-info {
  flex: 1;
  min-width: 0;
  color: #d8bf6a;
  font-size: 28px;
  line-height: 38px;
  white-space: normal;
}

.ad-progress,
.money {
  display: flex;
  align-items: center;
  gap: 8px;
  font-weight: 700;
}

.ad-progress {
  color: #8fcfff;
  font-size: 25px;
}

.money {
  color: #4be87d;
  font-size: 33px;
  line-height: 42px;
}

/* speed */
.speed-bar {
  display: flex;
  justify-content: center;
  align-items: center;
  gap: 8px;
  padding: 7px 0 6px;
  background: #060b1c;
  border-bottom: 2px solid #222b4e;
}

.speed-btn {
  display: flex;
  justify-content: center;
  align-items: center;
  width: 68px;
  height: 47px;
  padding-bottom: 2px;
  border-radius: 12px;
  background: #101733;
  font-size: 27px;
  font-weight: 700;
}

.speed-btn.pause {
  width: 70px;
  height: 49px;
  padding: 0;
  border: 2px solid #c59b3a;
  border-radius: 25px;
  background: #46340f;
}

.speed-btn.active {
  width: 70px;
  height: 49px;
  border: 2px solid #f0716b;
  background: #981d20;
}

.speed-btn.skip {
  font-size: 25px;
  font-weight: 400;
}

.speed-btn.day {
  background: #0d2438;
}

.speed-btn.week {
  background: #103020;
}

.speed-btn.month {
  background: #2c144b;
}

.separator {
  width: 2px;
  height: 39px;
  background: #222a49;
}

/* stat card */
.stat-card {
  position: relative;
  margin: -2px 6px 0 7px;
  padding: 16px 15px 15px;
  border: 3px solid #182450;
  border-radius: 34px;
  background: #040a1c;
}

.score-row {
  display: flex;
  justify-content: center;
  align-items: center;
  gap: 14px;
  padding-bottom: 6px;
  border-bottom: 2px solid #10162c;
}

.grade {
  width: 77px;
  height: 77px;
  border: 5px solid #ffd90f;
  border-radius: 50%;
  background: #2c2918;
  box-shadow: 0 0 16px rgba(255, 217, 15, 0.3);
  color: #ffd90f;
  font-size: 50px;
  font-weight: 700;
  line-height: 62px;
  text-align: center;
}

.score-info {
  display: flex;
  flex-direction: column;
  gap: 6px;
  padding-bottom: 6px;
}

.score-label {
  color: #78819f;
  font-size: 25px;
  line-height: 28px;
}

.score-value {
  color: #f0f3ff;
  font-size: 44px;
  font-weight: 700;
  line-height: 52px;
}

.stats {
  display: flex;
  flex-direction: column;
  gap: 12px;
  padding: 8px 0 14px;
  border-bottom: 2px solid #10162c;
}

.stat-row {
  display: flex;
}

.stat {
  width: 89px;
  display: flex;
  flex-direction: column;
  align-items: center;
}

.stat-circle {
  flex: none;
  width: 94px;
  height: 94px;
  padding-top: 4px;
  display: flex;
  flex-direction: column;
  align-items: center;
  gap: 4px;
  border: 5px solid;
  border-radius: 50%;
}

.stat-value {
  color: #fff;
  font-size: 30px;
  font-weight: 700;
  line-height: 40px;
}

.stat-label {
  font-size: 23px;
  line-height: 28px;
  opacity: 0.8;
}

.green { color: #43ba4b; }
.yellow { color: #cca92f; }
.blue { color: #589cde; }
.orange { color: #dc6c3d; }
.indigo { color: #6b8fe0; }
.pink { color: #d97db8; }
.purple { color: #ad6be6; }
.amber { color: #d29c50; }
.teal { color: #4ac2b0; }

.green .stat-circle { background: rgba(67, 186, 75, 0.38); box-shadow: 0 0 12px rgba(67, 186, 75, 0.4); }
.yellow .stat-circle { background: rgba(204, 169, 47, 0.4); box-shadow: 0 0 12px rgba(204, 169, 47, 0.4); }
.blue .stat-circle { background: rgba(88, 156, 222, 0.38); box-shadow: 0 0 12px rgba(88, 156, 222, 0.4); }
.orange .stat-circle { background: rgba(220, 108, 61, 0.37); box-shadow: 0 0 12px rgba(220, 108, 61, 0.4); }
.indigo .stat-circle { background: rgba(107, 143, 224, 0.38); box-shadow: 0 0 12px rgba(107, 143, 224, 0.4); }
.pink .stat-circle { background: rgba(217, 125, 184, 0.38); box-shadow: 0 0 12px rgba(217, 125, 184, 0.4); }
.purple .stat-circle { background: rgba(173, 107, 230, 0.38); box-shadow: 0 0 12px rgba(173, 107, 230, 0.5); }
.amber .stat-circle { background: rgba(210, 156, 80, 0.38); box-shadow: 0 0 12px rgba(210, 156, 80, 0.4); }
.teal .stat-circle { background: rgba(74, 194, 176, 0.37); box-shadow: 0 0 12px rgba(74, 194, 176, 0.4); }

.chips {
  display: flex;
  justify-content: center;
  align-items: center;
  gap: 9px;
  padding-top: 4px;
}

.chip {
  display: flex;
  align-items: center;
  gap: 10px;
  height: 64px;
  padding: 0 20px 2px;
  border: 2px solid #293d6e;
  border-radius: 28px;
  background: #0f1f48;
  color: #cbdaff;
  font-size: 30px;
  font-weight: 700;
}

.chip.luck {
  padding: 0 22px 2px;
  border-color: #51471f;
  background: #242010;
  color: #ffe14f;
}

.chip-btn {
  display: flex;
  align-items: center;
  gap: 7px;
  width: 138px;
  height: 96px;
  padding: 0 0 2px 15px;
  border: 2px solid;
  border-radius: 26px;
  font-size: 27px;
  font-weight: 700;
}

.chip-btn.sign {
  border-color: #603a7c;
  background: #311244;
  color: #ecc8ff;
}

.chip-btn.rank {
  border-color: #225078;
  background: #0c2845;
  color: #84c9f8;
}

.chip-btn.life {
  border-color: #652938;
  background: #30111f;
  color: #d75f7c;
}

/* floating capsule above the card */
.capsule {
  position: absolute;
  top: 42px;
  left: 16px;
  width: 243px;
  height: 97px;
  display: flex;
  align-items: center;
  border: 3px solid rgba(255, 255, 255, 0.22);
  border-radius: 49px;
  background: rgba(0, 0, 0, 0.5);
}

.capsule-btn {
  flex: 1;
  display: flex;
  justify-content: center;
  background: none;
}

.capsule-btn svg {
  fill: #fff;
}

.capsule-dots {
  width: 50px;
  height: 18px;
}

.capsule-ring {
  width: 50px;
  height: 50px;
}

.capsule-line {
  width: 3px;
  height: 60px;
  background: rgba(255, 255, 255, 0.25);
}

/* actions */
.actions {
  display: flex;
  align-items: flex-start;
  gap: 10px;
  padding: 16px 6px 0 7px;
}

.expand-btn,
.ad-btn {
  display: flex;
  justify-content: center;
  align-items: center;
  height: 68px;
  padding-bottom: 2px;
  border: 3px solid;
  border-radius: 34px;
}

.expand-btn {
  flex: 1;
  gap: 15px;
  margin-top: 5px;
  border-color: #284b8c;
  background: #0d1b40;
  font-size: 34px;
}

.arrow {
  width: 24px;
  height: 22px;
}

.ad-btn {
  gap: 10px;
  padding: 0 27px 2px;
  font-size: 31px;
}

.ad-btn.boost {
  border-color: #623383;
  background: #2c0c36;
}

.ad-btn.cash {
  border-color: #237a44;
  background: #0f2f1d;
  box-shadow: 0 0 12px rgba(35, 122, 68, 0.4);
}

/* tabs */
.tabs {
  position: relative;
  display: flex;
  gap: 7px;
  margin-top: -3px;
  padding: 10px 13px 6px;
  border-top: 1px solid #1b2444;
  background: #080d27;
}

.tab {
  display: flex;
  align-items: center;
  gap: 10px;
  height: 58px;
  padding: 0 16px 2px;
  border: 2px solid #1a2347;
  border-radius: 18px;
  background: #0e1638;
  font-size: 30px;
}

.tab.active {
  border-color: #dcbc0c;
  background: #dcbc0c;
  box-shadow: 0 0 16px rgba(220, 188, 12, 0.4);
  font-weight: 700;
}

/* life log */
.log {
  flex: 1;
  min-height: 0;
  overflow: hidden;
  margin: 0 -1px;
  padding: 17px 18px 0 20px;
  border: 2px solid #1c2242;
  border-radius: 0 0 28px 28px;
  background: #040919;
}

.age-row {
  display: flex;
  align-items: center;
  gap: 16px;
  margin-bottom: 18px;
}

.age-badge {
  padding: 0 20px 2px 15px;
  border-radius: 9px;
  background: #1a2d63;
  color: #8ab6ff;
  font-size: 35px;
  line-height: 64px;
}

.age-line {
  flex: 1;
  height: 2px;
  background: #151d3b;
}

.event {
  display: flex;
  gap: 18px;
  margin-bottom: 26px;
  padding-left: 8px;
}

.dot {
  flex: none;
  width: 13px;
  height: 13px;
  margin-top: 15px;
  border-radius: 50%;
}

.dot.info {
  background: #68a0ff;
}

.dot.good {
  background: #52d964;
}

.event-body {
  flex: 1;
  min-width: 0;
}

.event-title {
  margin-bottom: 1px;
  color: #d5dcf6;
  font-size: 34px;
  line-height: 56px;
}

.event-title .icon {
  margin-right: 11px;
  vertical-align: -4px;
}

.event-desc {
  color: #7a829f;
  font-size: 37px;
  line-height: 48px;
}

.event-desc.indent {
  padding-left: 7px;
}

.event-desc .icon {
  margin-right: 11px;
  vertical-align: -4px;
  opacity: 0.8;
}

/* bottom menu */
.menu {
  display: grid;
  grid-template-columns: repeat(5, 1fr);
  gap: 11px 10px;
  padding: 11px 12px 21px 13px;
  border-top: 2px solid #1e2547;
  background: #060a1a;
}

.menu-btn {
  display: flex;
  justify-content: center;
  align-items: center;
  gap: 10px;
  height: 80px;
  padding-bottom: 2px;
  border-radius: 14px;
  font-size: 30px;
}

.c-phone { background: #192040; }
.c-city { background: #184266; }
.c-venue { background: #2f305e; }
.c-file { background: #203055; }
.c-bank { background: #14271c; }
.c-service { background: #122b46; }
.c-gov { background: #211334; }
.c-asset { background: #3b240f; }
.c-school { background: #133829; }
.c-police { background: #12224e; }
.c-traffic { background: #321d10; }
.c-train { background: #0a1d48; }
.c-market { background: #133339; }
.c-skill { background: #25133d; }
.c-event { background: #233370; }

.c-pause {
  grid-column: 1 / -1;
  background: #452d17;
}
</style>
